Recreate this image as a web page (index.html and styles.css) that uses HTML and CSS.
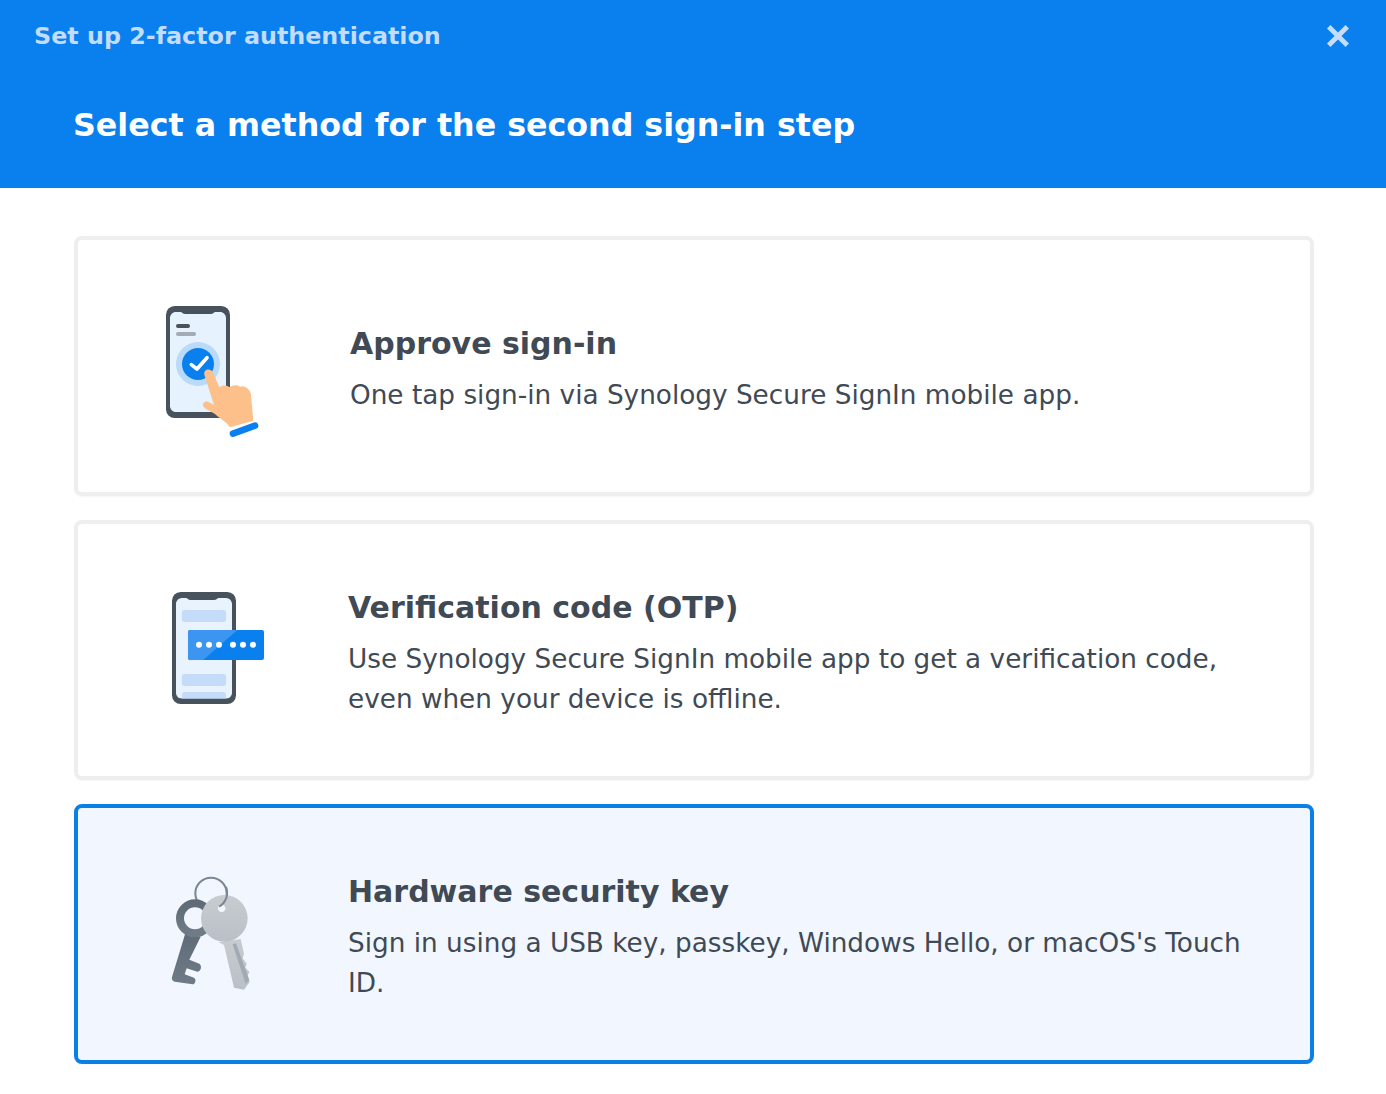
FILE: index.html
```html
<!DOCTYPE html>
<html lang="en">
<head>
<meta charset="utf-8">
<title>Set up 2-factor authentication</title>
<link rel="stylesheet" href="styles.css">
</head>
<body>
<header class="header">
  <div class="topbar">
    <span class="window-title">Set up 2-factor authentication</span>
    <button class="close" aria-label="Close">
      <svg viewBox="0 0 22 22" width="24" height="24"><path d="M2.5 2.5 19.500 19.500M19.500 2.500 2.500 19.500" class="close-x"/></svg>
    </button>
  </div>
  <h1 class="heading">Select a method for the second sign-in step</h1>
</header>
<main class="methods">
  <section class="card">
    <svg class="icon" viewBox="0 0 100 140">
      <g transform="translate(-20 -6) scale(.33333)">
        <rect x="78" y="48" width="192" height="336" rx="26" fill="#48525c"/>
        <path d="M108 66h14c4 0 6 6 14 6h76c8 0 10-6 14-6h14c10 0 18 8 18 18v264c0 10-8 18-18 18H108c-10 0-18-8-18-18V84c0-10 8-18 18-18z" fill="#e6f2fe"/>
        <rect x="108" y="102" width="42" height="12" rx="6" fill="#48525c"/>
        <rect x="108" y="126" width="60" height="12" rx="6" fill="#a3abb3"/>
        <circle cx="174" cy="222" r="66" fill="#b9daf9"/>
        <circle cx="174" cy="222" r="48" fill="#0a7fee"/>
        <path d="M154 224l17 13 30-34" fill="none" stroke="#fff" stroke-width="11" stroke-linecap="round" stroke-linejoin="round"/>
        <path d="M193 254C190 236 214 232 220 250L238 292C248 284 262 286 268 292C278 284 292 284 300 290C314 284 330 296 333 314L340 392 270 412C258 394 240 386 225 372L197 356C182 346 190 330 206 336L222 344Z" fill="#fdc08b"/>
        <path d="M279 431 345 407" stroke="#0a7fee" stroke-width="20" stroke-linecap="round"/>
      </g>
    </svg>
    <div class="copy copy-first">
      <h2 class="title">Approve sign-in</h2>
      <p class="desc">One tap sign-in via Synology Secure SignIn mobile app.</p>
    </div>
  </section>
  <section class="card">
    <svg class="icon" viewBox="0 0 100 140">
      <defs>
        <clipPath id="screen"><path d="M96 54h12c4 0 6 6 14 6h70c8 0 10-6 14-6h22c10 0 18 8 18 18v266c0 10-8 18-18 18H96c-10 0-18-8-18-18V72c0-10 8-18 18-18z"/></clipPath>
      </defs>
      <g transform="translate(-10 0) scale(.33333)">
        <rect x="66" y="36" width="192" height="336" rx="26" fill="#48525c"/>
        <g clip-path="url(#screen)">
          <rect x="78" y="54" width="168" height="302" fill="#e8f3fe"/>
          <rect x="96" y="90" width="132" height="36" rx="8" fill="#c4dcfa"/>
          <rect x="96" y="282" width="132" height="36" rx="8" fill="#c4dcfa"/>
          <rect x="96" y="336" width="132" height="36" rx="8" fill="#c4dcfa"/>
        </g>
        <rect x="114" y="150" width="228" height="90" rx="6" fill="#0a7fee"/>
        <path d="M120 150h142L160 240h-40c-3 0-6-3-6-6v-78c0-3 3-6 6-6z" fill="#3b95f1"/>
        <g fill="#fff">
          <circle cx="147" cy="194" r="9"/><circle cx="177" cy="194" r="9"/><circle cx="207" cy="194" r="9"/>
          <circle cx="249" cy="194" r="9"/><circle cx="279" cy="194" r="9"/><circle cx="309" cy="194" r="9"/>
        </g>
      </g>
    </svg>
    <div class="copy">
      <h2 class="title">Verification code (OTP)</h2>
      <p class="desc">Use Synology Secure SignIn mobile app to get a verification code, even when your device is offline.</p>
    </div>
  </section>
  <section class="card card-selected">
    <svg class="icon" viewBox="0 0 100 140">
      <defs>
        <linearGradient id="dark" x1="0" y1="0" x2="0" y2="1"><stop offset="0" stop-color="#5f6b76"/><stop offset="1" stop-color="#6f7c88"/></linearGradient>
        <linearGradient id="light" x1="0" y1="0" x2="0" y2="1"><stop offset="0" stop-color="#c8ccd0"/><stop offset="1" stop-color="#b9c0c6"/></linearGradient>
      </defs>
      <g transform="translate(-10 1) scale(.33333)">
        <circle cx="183" cy="85" r="47" fill="none" stroke="#7b8693" stroke-width="6"/>
        <path d="M106 205 66 336C64 344 68 348 74 350L128 358C136 358 140 342 132 338L104 328 110 310 142 320C153 320 157 302 148 296L118 284 152 215Z" fill="url(#dark)"/>
        <circle cx="135" cy="160" r="45" fill="none" stroke="url(#dark)" stroke-width="24"/>
        <path d="M206 232 222 240 252 368 282 374 299 350 292 334 298 320 286 308 290 296 278 280 282 266 272 222Z" fill="url(#light)"/>
        <circle cx="223" cy="160" r="70" fill="url(#light)"/>
        <path d="M248 238 258 235 298 345 287 356Z" fill="#a0aab3"/>
        <circle cx="215" cy="130" r="11" fill="#f2f7ff"/>
        <path d="M228 66A47 47 0 0 1 207 125" fill="none" stroke="#7b8693" stroke-width="6"/>
      </g>
    </svg>
    <div class="copy">
      <h2 class="title">Hardware security key</h2>
      <p class="desc">Sign in using a USB key, passkey, Windows Hello, or macOS's Touch ID.</p>
    </div>
  </section>
</main>
</body>
</html>
```
FILE: styles.css
```css
* { box-sizing: border-box; }
html, body { margin: 0; padding: 0; background: #fff; }
body { font-family: "DejaVu Sans", sans-serif; color: #3f4a55; }
.header { height: 188px; background: #0a7fee; padding: 0 36px 0 34px; }
.topbar { display: flex; justify-content: space-between; align-items: center; height: 74px; }
.window-title { font: 700 23.800px/1 "DejaVu Sans", sans-serif; color: #c4dcfd; }
.close { display: block; padding: 0; border: 0; margin-bottom: 2px; background: none; line-height: 0; }
.close-x { fill: none; stroke: #c4dcfd; stroke-width: 4.5; }
.heading { margin: 31px 0 0 39px; font: 700 31.700px/40px "DejaVu Sans", sans-serif; color: #fff; }
.methods { display: flex; flex-direction: column; gap: 24px; padding: 48px 72px 0 74px; }
.card { display: flex; align-items: center; height: 260px; border: 4px solid #eee; border-radius: 8px; padding-left: 82px; box-shadow: 0 1px 2px rgba(0,0,0,.04); }
.card-selected { border-color: #0a7fe6; background: #f2f7ff; }
.icon { flex: none; width: 100px; height: 140px; margin-right: 88px; overflow: visible; }
.copy { flex: 1; padding-right: 60px; }
.copy-first { padding-left: 2px; }
.title { margin: 7px 0 11px; font: 700 30px/40px "DejaVu Sans", sans-serif; color: #3f4a55; }
.desc { margin: 0; font-size: 26.300px; line-height: 40px; color: #3f4a55; }
```
